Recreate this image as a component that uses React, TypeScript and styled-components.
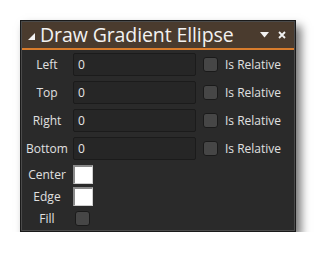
import React from "react";
import styled, { createGlobalStyle } from "styled-components";

const GlobalStyle = createGlobalStyle`
  body {
    margin: 0;
    background: #ffffff;
    font-family: "Open Sans", "Noto Sans", sans-serif;
  }
`;

const Page = styled.div`
  padding: 20px 0 0 20px;
`;

const Panel = styled.div`
  width: 276px;
  height: 212px;
  box-sizing: border-box;
  background: #2a2a2a;
  border: 1px solid #1a1a1a;
  box-shadow: inset 0 0 0 1px #4a4a4a, 5px 6px 9px rgba(0, 0, 0, 0.55);
  display: flex;
  flex-direction: column;
`;

const TitleBar = styled.div`
  height: 26px;
  display: flex;
  align-items: center;
  padding: 0 6px 0 6px;
  background: #4a3b2e;
  border-bottom: 2px solid #d97c2c;
  margin: 1px 1px 0 1px;
  color: #f2f2f2;
`;

const Title = styled.span`
  flex: 1;
  font-size: 19.5px;
  line-height: 26px;
  margin-left: 5px;
  letter-spacing: -0.1px;
`;

const TitleIcon = styled.svg`
  display: block;
  margin-top: 3px;
`;

const Body = styled.div`
  display: flex;
  flex-direction: column;
  padding: 3px 0 0 0;
`;

const Row = styled.div<{ $gap?: number }>`
  display: flex;
  align-items: center;
  margin-bottom: ${(p) => p.$gap ?? 5}px;
`;

const Label = styled.span`
  width: 52px;
  text-align: center;
  color: #e0e0e0;
  font-size: 12px;
`;

const Field = styled.div`
  width: 123px;
  height: 23px;
  box-sizing: border-box;
  background: #262626;
  border: 1px solid #1b1b1b;
  border-radius: 2px;
  color: #e6e6e6;
  font-size: 12px;
  line-height: 21px;
  padding-left: 4px;
`;

const Check = styled.div<{ $left?: number }>`
  width: 15px;
  height: 15px;
  box-sizing: border-box;
  margin-left: ${(p) => p.$left ?? 7}px;
  background: #464646;
  border: 1px solid #1a1a1a;
  border-radius: 3px;
`;

const CheckText = styled.span`
  margin-left: 7px;
  color: #e0e0e0;
  font-size: 12px;
`;

const Swatch = styled.div`
  width: 20px;
  height: 19px;
  box-sizing: border-box;
  background: #ffffff;
  border-top: 2px solid #8a8a8a;
  border-left: 2px solid #8a8a8a;
  border-right: 1px solid #cfcfcf;
  border-bottom: 1px solid #cfcfcf;
`;

const fields = ["Left", "Top", "Right", "Bottom"];

export default function App() {
  return (
    <>
      <GlobalStyle />
      <Page>
        <Panel>
          <TitleBar>
            <TitleIcon width="7" height="7" viewBox="0 0 7 7">
              <polygon points="0,7 7,7 7,0" fill="#f2f2f2" />
            </TitleIcon>
            <Title>Draw Gradient Ellipse</Title>
            <svg width="9" height="6" viewBox="0 0 9 6" style={{ marginRight: 9 }}>
              <polygon points="0,0 9,0 4.5,5.5" fill="#f2f2f2" />
            </svg>
            <svg width="8" height="8" viewBox="0 0 8 8" style={{ marginRight: 2 }}>
              <path d="M1 1 L7 7 M7 1 L1 7" stroke="#f2f2f2" strokeWidth="1.8" />
            </svg>
          </TitleBar>
          <Body>
            {fields.map((f) => (
              <Row key={f}>
                <Label>{f}</Label>
                <Field>0</Field>
                <Check />
                <CheckText>Is Relative</CheckText>
              </Row>
            ))}
            <Row $gap={3}>
              <Label>Center</Label>
              <Swatch />
            </Row>
            <Row $gap={4}>
              <Label>Edge</Label>
              <Swatch />
            </Row>
            <Row>
              <Label>Fill</Label>
              <Check $left={2} />
            </Row>
          </Body>
        </Panel>
      </Page>
    </>
  );
}
